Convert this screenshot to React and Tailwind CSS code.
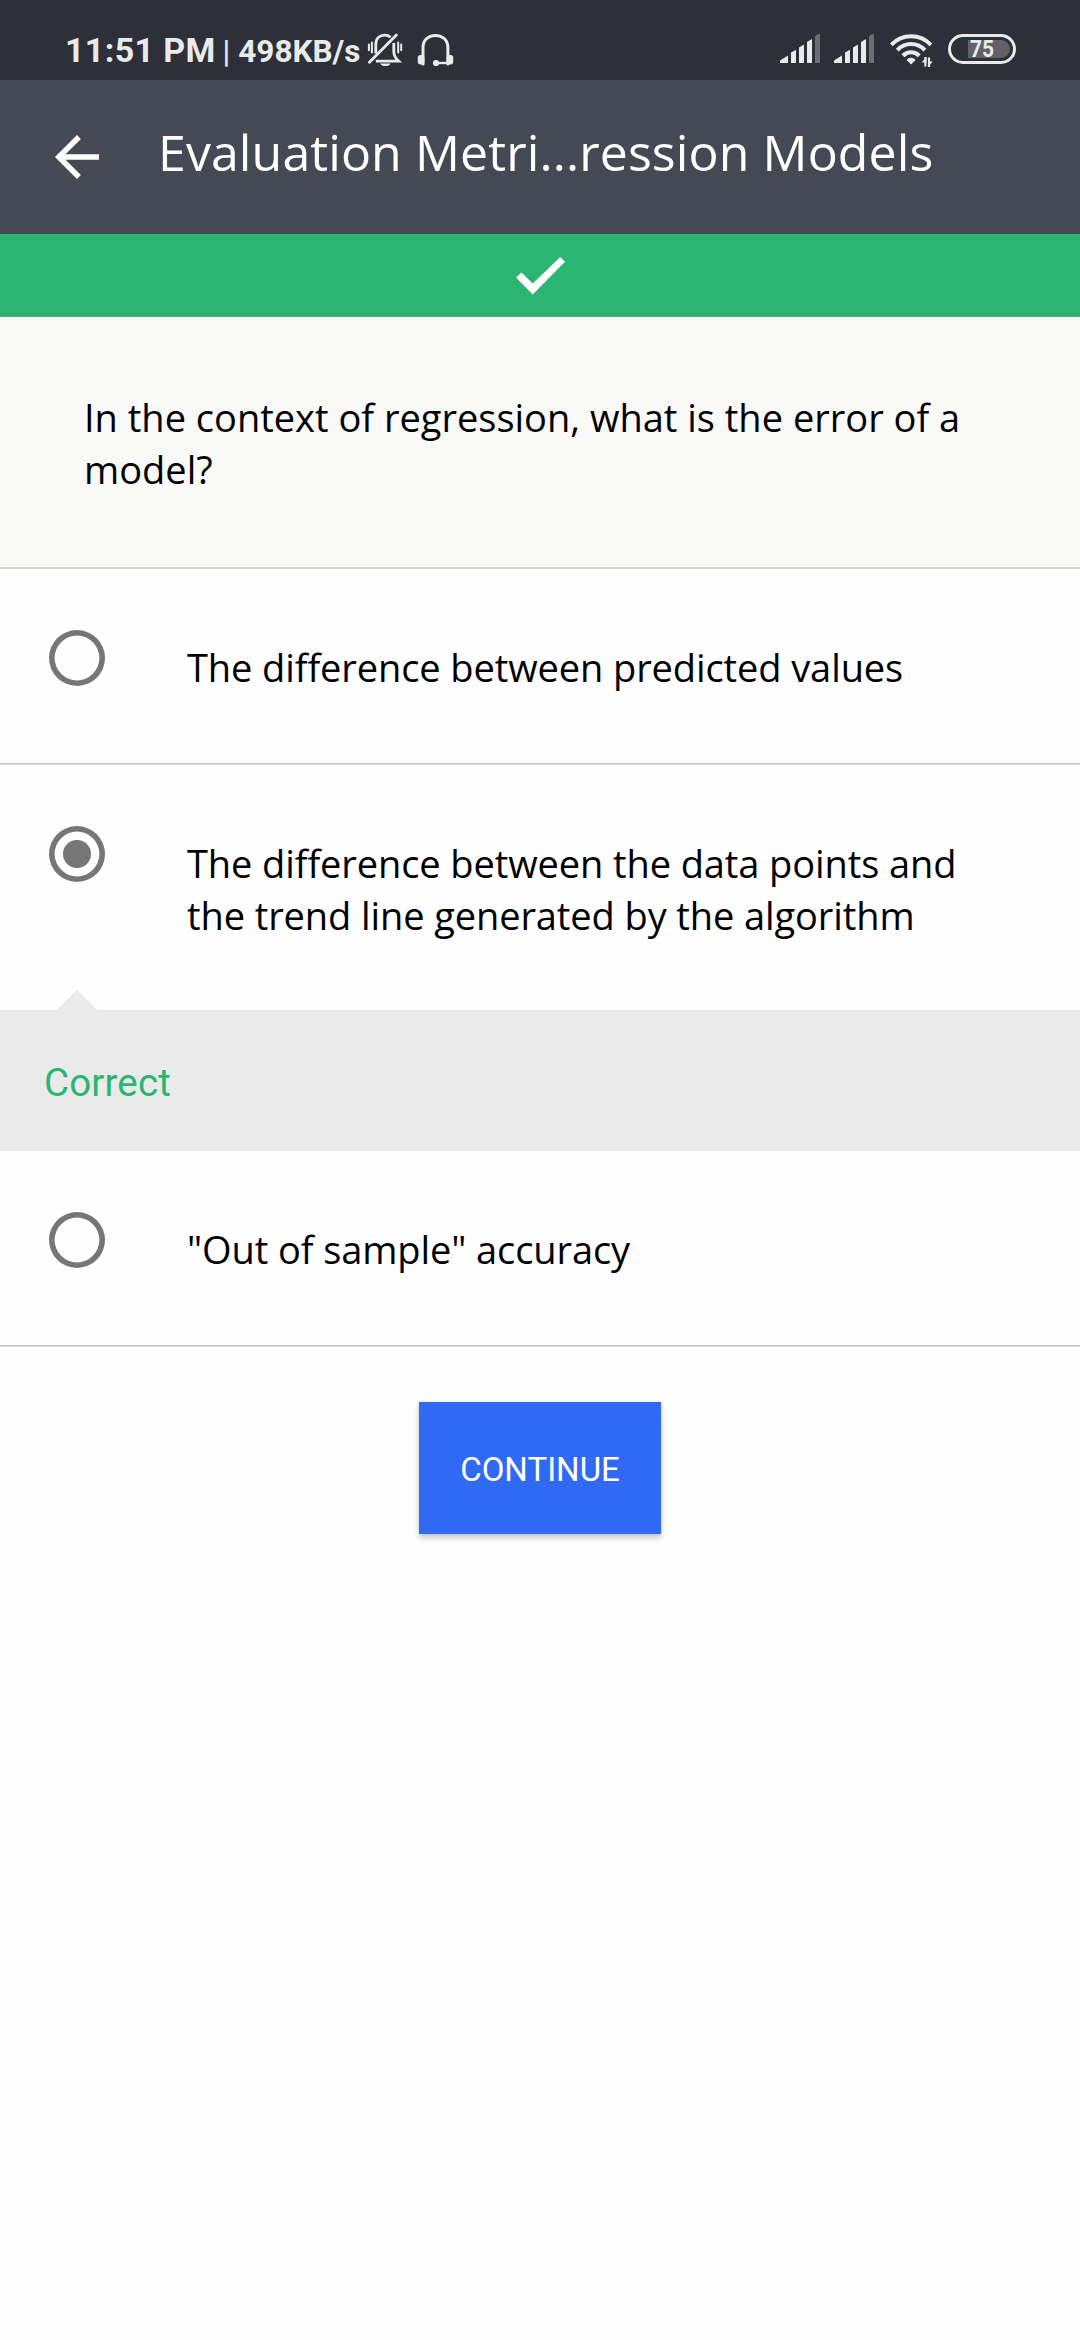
function BellOff() {
  return (
    <svg className="ml-[6px] size-10 shrink-0" viewBox="366 30 40 40" fill="none" stroke="#e9eaea" strokeWidth="2.8">
      <path d="M375.8 53.5V44.5C375.8 38.5 379.8 35.2 384.8 35.2C387.2 35.2 389.2 36 390.6 37.2" />
      <path d="M393.8 43V51.5C393.8 55.5 395.6 58.5 398.6 61.1H375.8" />
      <path d="M369.4 62.2L396.4 35" strokeLinecap="round" />
      <path d="M368.9 44.6V50.2M371.9 42.4V52.4M398.2 42.4V52.4M401.2 44.6V50.2" strokeWidth="2" strokeLinecap="round" />
      <path d="M380.2 63.4H390.6C389.6 65.2 387.8 66.1 385.4 66.1C383 66.1 381.2 65.2 380.2 63.4Z" fill="#e9eaea" stroke="none" />
    </svg>
  );
}

function Headset() {
  return (
    <svg className="ml-[9px] size-10 shrink-0" viewBox="415 30 40 40" fill="none" stroke="#e9eaea" strokeWidth="3">
      <path d="M423 64V47.5C423 40.4 428 35.4 435.4 35.4C442.8 35.4 447.9 40.4 447.9 47.5V64" strokeLinecap="round" />
      <rect x="417.8" y="55" width="6.6" height="9.4" rx="2.6" fill="#e9eaea" stroke="none" />
      <rect x="446.6" y="55" width="6.6" height="9.4" rx="2.6" fill="#e9eaea" stroke="none" />
      <path d="M436 63H448" strokeWidth="2.4" />
      <circle cx="436" cy="63" r="3.1" fill="#e9eaea" stroke="none" />
    </svg>
  );
}

function Signal() {
  return (
    <svg className="h-[30px] w-10 shrink-0" viewBox="0 0 40 30" fill="#e9eaea">
      <path d="M0 29V26.5L8 21.5V29Z" />
      <path d="M11 29V18.5L16 15.8V29Z" />
      <path d="M19 29V13.5L24 10.5V29Z" />
      <path d="M27 29V8L32 5V29Z" />
      <path d="M35 29V2.5L37.5 .3H40V29Z" fill="#6b6e73" />
    </svg>
  );
}

function Wifi() {
  return (
    <svg className="ml-4 h-[36px] w-[44px] shrink-0" viewBox="890 33 44 36" fill="none" stroke="#e9eaea">
      <path d="M891.3 44.8A27 27 0 0 1 930.9 44.8" strokeWidth="4" />
      <path d="M897.3 50.2A18.5 18.5 0 0 1 924.9 50.2" strokeWidth="4" />
      <path d="M903 55.8A11 11 0 0 1 919.2 55.8" strokeWidth="4" />
      <path d="M907 60C909 57.6 913.2 57.6 915.2 60L911.1 64Z" fill="#e9eaea" strokeLinejoin="round" strokeWidth="1" />
      <path d="M925.4 57V66.5M929 57.5V67" strokeWidth="2.2" />
      <path d="M921.6 62.5L926.5 57V62.5ZM932.8 61.5L928 67V61.5Z" fill="#e9eaea" stroke="none" />
    </svg>
  );
}

function Battery() {
  return (
    <div className="ml-[14px] flex h-[30px] w-[68px] shrink-0 items-center justify-end rounded-full border-[3px] border-[#e9eaea] pr-[3px]">
      <div className="flex h-[18px] w-[42px] items-center rounded-r-full bg-[#5f6266] pl-[2px] text-[24px] leading-none font-bold">
        <span className="origin-left scale-x-[0.87]">75</span>
      </div>
    </div>
  );
}

function StatusBar() {
  return (
    <div className="flex h-20 items-start bg-[#2d3038] font-['Roboto',sans-serif] text-[#e9eaea]">
      <div className="flex h-20 items-baseline pt-[30px] pl-[65px] font-bold whitespace-nowrap">
        <span className="text-[34px] leading-10 tracking-[0.35px]">11:51 PM</span>
        <span className="ml-[7px] text-[31px] leading-10 font-medium">|</span>
        <span className="ml-[8px] text-[31.5px] leading-10">498KB/s</span>
      </div>
      <div className="flex pt-[30px]">
        <BellOff />
        <Headset />
      </div>
      <div className="mr-16 ml-auto flex items-start pt-[34px]">
        <div className="flex gap-[14px]">
          <Signal />
          <Signal />
        </div>
        <div className="-mt-px">
          <Wifi />
        </div>
        <Battery />
      </div>
    </div>
  );
}

function Radio({ checked }) {
  return (
    <span className="mt-[61px] ml-[49px] flex size-14 shrink-0 items-center justify-center rounded-full shadow-[inset_0_0_0_5.6px_#767676]">
      {checked && <span className="size-7 rounded-full bg-[#767676]" />}
    </span>
  );
}

function Option({ checked, children, className }) {
  return (
    <div className={"flex items-start bg-[#fefefe] " + className}>
      <Radio checked={checked} />
      <p className="mt-[72px] ml-[82px] text-[38px] leading-[52px] tracking-[-0.095px] whitespace-nowrap">{children}</p>
    </div>
  );
}

function Divider() {
  return <div className="h-[2px] border-t border-[#c6c6c6] bg-[#dadada]" />;
}

export default function App() {
  return (
    <div className="flex h-[2340px] w-[1080px] flex-col overflow-hidden bg-[#fefefe] font-['Open_Sans',sans-serif] text-black">
      <StatusBar />
      <header className="flex h-[154px] items-start bg-[#444a54] pl-11 text-white">
        <svg className="mt-11 size-[66px] shrink-0" viewBox="0 0 24 24" fill="currentColor">
          <path d="M20 11H7.83l5.59-5.59L12 4l-8 8 8 8 1.41-1.41L7.83 13H20v-2z" />
        </svg>
        <h1 className="mt-[38px] ml-[48px] text-[50px] leading-[68px] tracking-[0.11px] whitespace-nowrap">
          Evaluation Metri...ression Models
        </h1>
      </header>
      <div className="flex h-[83px] justify-center border-b border-[#57a584] bg-[#2bb573] pt-[23px]">
        <svg className="h-[38px] w-[49px]" viewBox="0 0 49 38" fill="white">
          <path d="M0 20.5L5.5 15.5L16.7 26.5L44.3 0L49 4.7L16.7 37.5Z" />
        </svg>
      </div>
      <section className="h-[250px] bg-[#f9f9f8] pt-[74px] pl-[84px] text-[38px] leading-[52px]">
        In the context of regression, what is the error of a
        <br />
        model?
      </section>
      <div className="h-[2px] bg-[#d5d5d4]" />
      <Option className="h-[194px]">The difference between predicted values</Option>
      <Divider />
      <Option checked className="h-[245px]">
        The difference between the data points and
        <br />
        the trend line generated by the algorithm
      </Option>
      <div className="relative h-[141px] bg-[#eaeaea] pt-[50px] pl-[44px] font-['Roboto',sans-serif] text-[38.5px] leading-[45px] tracking-[0.15px] text-[#2bb573]">
        <span className="absolute -top-[20px] left-[56.5px] h-[20px] w-[41px] bg-[#eaeaea] [clip-path:polygon(50%_0,100%_100%,0_100%)]" />
        Correct
      </div>
      <Option className="h-[194px]">"Out of sample" accuracy</Option>
      <Divider />
      <button className="mx-auto mt-[55px] flex h-[132px] w-[242px] items-center justify-center bg-[#3069f4] pt-[3px] font-['Roboto',sans-serif] text-[33px] leading-10 text-white shadow-[0_4px_6px_rgba(0,0,0,0.2),0_0_3px_rgba(0,0,0,0.1)]">
        CONTINUE
      </button>
    </div>
  );
}
